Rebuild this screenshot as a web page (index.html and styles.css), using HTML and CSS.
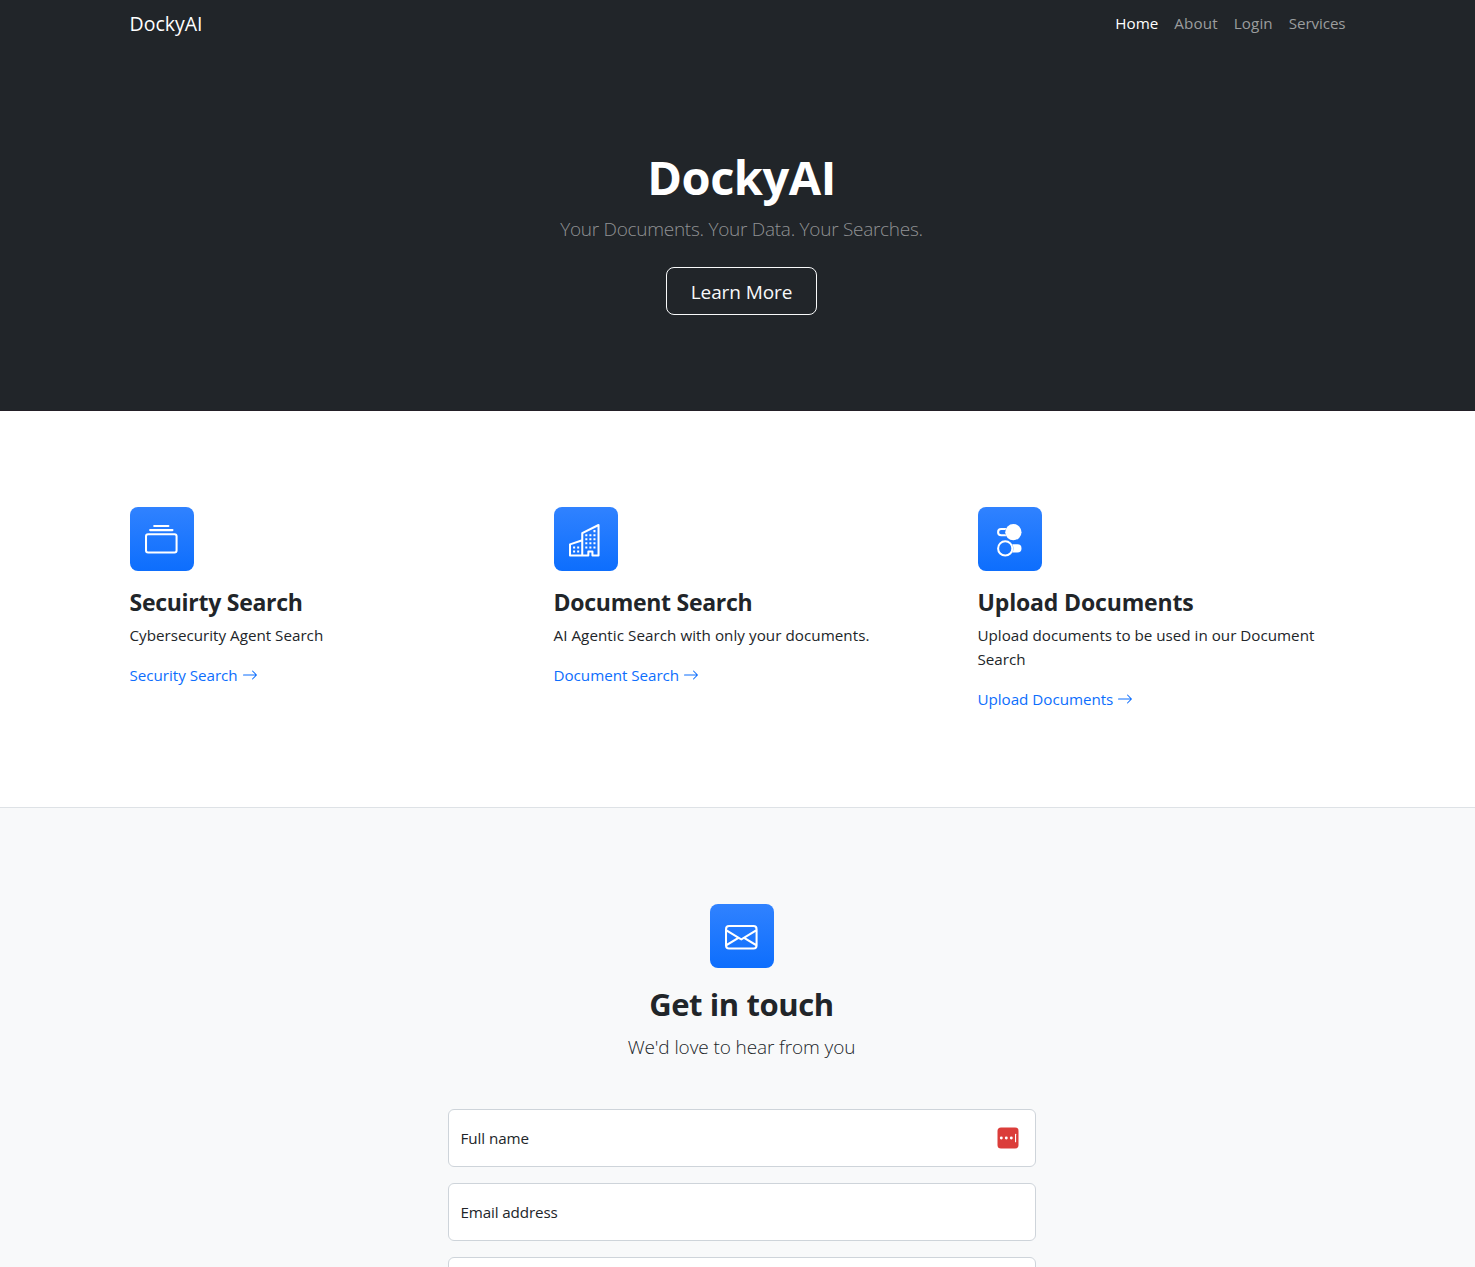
FILE: index.html
```html
<!DOCTYPE html>
<html lang="en">
<head>
<meta charset="utf-8">
<title>DockyAI</title>
<link rel="stylesheet" href="styles.css">
</head>
<body>
<div class="page">
  <nav class="navbar">
    <div class="container">
      <a class="brand" href="#"><span>DockyAI</span></a>
      <ul class="nav-links">
        <li><a class="active" href="#">Home</a></li>
        <li><a class="about" href="#">About</a></li>
        <li><a class="login" href="#">Login</a></li>
        <li><a class="services" href="#">Services</a></li>
      </ul>
    </div>
  </nav>
  <header class="hero">
    <h1><span>DockyAI</span></h1>
    <p><span>Your Documents. Your Data. Your Searches.</span></p>
    <a class="btn" href="#"><span>Learn More</span></a>
  </header>
  <section class="features">
    <div class="container grid">
      <article>
        <div class="feature-icon"><svg viewBox="0 0 16 16"><path d="M2.5 3.5a.5.5 0 0 1 0-1h11a.5.5 0 0 1 0 1zm2-2a.5.5 0 0 1 0-1h7a.5.5 0 0 1 0 1zM0 13a1.5 1.5 0 0 0 1.5 1.5h13A1.5 1.5 0 0 0 16 13V6a1.5 1.5 0 0 0-1.5-1.5h-13A1.5 1.5 0 0 0 0 6zm1.5.5A.5.5 0 0 1 1 13V6a.5.5 0 0 1 .5-.5h13a.5.5 0 0 1 .5.5v7a.5.5 0 0 1-.5.5z"/></svg></div>
        <h2><span>Secuirty Search</span></h2>
        <p><span>Cybersecurity Agent Search</span></p>
        <a class="more" href="#"><span>Security Search</span><svg viewBox="0 0 16 16"><path d="M1 8a.5.5 0 0 1 .5-.5h11.793l-3.147-3.146a.5.5 0 0 1 .708-.708l4 4a.5.5 0 0 1 0 .708l-4 4a.5.5 0 0 1-.708-.708L13.293 8.5H1.5A.5.5 0 0 1 1 8z"/></svg></a>
      </article>
      <article>
        <div class="feature-icon"><svg viewBox="0 0 16 16"><path d="M14.763.075A.5.5 0 0 1 15 .5v15a.5.5 0 0 1-.5.5h-3a.5.5 0 0 1-.5-.5V14h-1v1.5a.5.5 0 0 1-.5.5h-9a.5.5 0 0 1-.5-.5V10a.5.5 0 0 1 .342-.474L6 7.64V4.5a.5.5 0 0 1 .276-.447l8-4a.5.5 0 0 1 .487.022ZM6 8.694 1 10.36V15h5V8.694ZM7 15h2v-1.5a.5.5 0 0 1 .5-.5h2a.5.5 0 0 1 .5.5V15h2V1.309l-7 3.5V15Z"/><path d="M2 11h1v1H2v-1Zm2 0h1v1H4v-1Zm-2 2h1v1H2v-1Zm2 0h1v1H4v-1Zm4-4h1v1H8V9Zm2 0h1v1h-1V9Zm-2 2h1v1H8v-1Zm2 0h1v1h-1v-1Zm2-2h1v1h-1V9Zm0 2h1v1h-1v-1ZM8 7h1v1H8V7Zm2 0h1v1h-1V7Zm2 0h1v1h-1V7ZM8 5h1v1H8V5Zm2 0h1v1h-1V5Zm2 0h1v1h-1V5Zm0-2h1v1h-1V3Z"/></svg></div>
        <h2><span>Document Search</span></h2>
        <p class="wide"><span>AI Agentic Search with only your documents.</span></p>
        <a class="more" href="#"><span>Document Search</span><svg viewBox="0 0 16 16"><path d="M1 8a.5.5 0 0 1 .5-.5h11.793l-3.147-3.146a.5.5 0 0 1 .708-.708l4 4a.5.5 0 0 1 0 .708l-4 4a.5.5 0 0 1-.708-.708L13.293 8.5H1.5A.5.5 0 0 1 1 8z"/></svg></a>
      </article>
      <article>
        <div class="feature-icon"><svg viewBox="0 0 16 16"><path d="M9.465 10H12a2 2 0 1 1 0 4H9.465c.34-.588.535-1.271.535-2 0-.729-.195-1.412-.535-2z"/><path d="M6 15a3 3 0 1 0 0-6 3 3 0 0 0 0 6zm0 1a4 4 0 1 1 0-8 4 4 0 0 1 0 8zm.535-10a3.975 3.975 0 0 1-.409-1H4a1 1 0 0 1 0-2h2.126c.091-.355.23-.69.41-1H4a2 2 0 1 0 0 4h2.535z"/><path d="M14 4a4 4 0 1 1-8 0 4 4 0 0 1 8 0z"/></svg></div>
        <h2 class="wide"><span>Upload Documents</span></h2>
        <p><span>Upload documents to be used in our Document Search</span></p>
        <a class="more" href="#"><span>Upload Documents</span><svg viewBox="0 0 16 16"><path d="M1 8a.5.5 0 0 1 .5-.5h11.793l-3.147-3.146a.5.5 0 0 1 .708-.708l4 4a.5.5 0 0 1 0 .708l-4 4a.5.5 0 0 1-.708-.708L13.293 8.5H1.5A.5.5 0 0 1 1 8z"/></svg></a>
      </article>
    </div>
  </section>
  <section class="contact">
    <div class="feature-icon"><svg viewBox="0 0 16 16"><path d="M0 4a2 2 0 0 1 2-2h12a2 2 0 0 1 2 2v8a2 2 0 0 1-2 2H2a2 2 0 0 1-2-2V4Zm2-1a1 1 0 0 0-1 1v.217l7 4.2 7-4.2V4a1 1 0 0 0-1-1H2Zm13 2.383-4.708 2.825L15 11.105V5.383Zm-.034 6.876-5.64-3.471L8 9.583l-1.326-.795-5.64 3.47A1 1 0 0 0 2 13h12a1 1 0 0 0 .966-.741ZM1 11.105l4.708-2.897L1 5.383v5.722Z"/></svg></div>
    <h2><span>Get in touch</span></h2>
    <p><span>We'd love to hear from you</span></p>
    <form class="form">
      <div class="field"><label>Full name</label>
        <svg class="pass" viewBox="0 0 22 22"><rect x=".5" y=".5" width="21" height="21" rx="3.5" fill="#db3d3a"/><g fill="#fff"><circle cx="4.3" cy="11" r="1.45"/><circle cx="9.3" cy="11" r="1.45"/><circle cx="14.3" cy="11" r="1.45"/><rect x="18" y="6.7" width="1.1" height="8.6" rx=".5"/></g></svg>
      </div>
      <div class="field"><label class="email">Email address</label></div>
      <div class="field"></div>
    </form>
  </section>
</div>
</body>
</html>
```
FILE: styles.css
```css
* { box-sizing: border-box; }
html { overflow: hidden; }
body {
  margin: 0;
  height: 1267px;
  overflow: hidden;
  font: 400 15.2px/24px "Segoe UI", "Open Sans", sans-serif;
  color: #212529;
  background: #fff;
}
.page { width: 1483px; }
h1, h2, p, ul { margin: 0; padding: 0; }
a { text-decoration: none; color: inherit; }
.container { width: 1224px; margin: 0 auto; }

.navbar { background: #212529; color: #fff; height: 51px; }
.navbar .container {
  display: flex;
  justify-content: space-between;
  align-items: center;
  height: 47px;
}
.brand { font-size: 19.5px; line-height: 30px; letter-spacing: 0; }
.nav-links { display: flex; list-style: none; padding-bottom: 2px; }
.nav-links a { display: block; padding: 0 8px; color: #9b9d9e; }
.nav-links a.active { color: #fff; }
.nav-links .about { letter-spacing: .15px; }
.nav-links .login { letter-spacing: .1px; }
.nav-links .services { letter-spacing: -.1px; }

.hero {
  display: flex;
  flex-direction: column;
  align-items: center;
  height: 360px;
  padding-top: 97px;
  background: #212529;
  border-bottom: 1px solid #231f27;
}
.hero h1 { font-size: 47px; line-height: 58px; font-weight: 700; color: #fff; letter-spacing: -.5px; }
.hero p { margin: 8px 0 23px; font-size: 19px; line-height: 30px; font-weight: 300; color: #909294; letter-spacing: -.27px; }
.btn {
  display: flex;
  align-items: center;
  justify-content: center;
  width: 151px;
  height: 48px;
  padding-top: 2px;
  border: 1px solid #f8f9fa;
  border-radius: 8px;
  color: #f8f9fa;
  font-size: 19px;
  letter-spacing: -.1px;
}

.features { padding: 96px 0; border-bottom: 1px solid #dee2e6; }
.grid { display: grid; grid-template-columns: repeat(3, 376px); gap: 48px; }
.feature-icon {
  display: flex;
  align-items: center;
  justify-content: center;
  width: 64px;
  height: 64px;
  padding-top: 2px;
  border-radius: 8px;
  color: #fff;
  background: linear-gradient(180deg, #3082ff, #0d6efd);
}
.feature-icon svg { width: 32.6px; height: 32.6px; fill: currentColor; overflow: visible; }
.features h2 { margin: 17px 0 6px; font-size: 23px; line-height: 29px; font-weight: 700; letter-spacing: -.27px; }
.features h2.wide { letter-spacing: -.15px; }
.features p { margin-bottom: 16px; letter-spacing: 0; }
.features p.wide { letter-spacing: .05px; }
.more { display: flex; align-items: center; gap: 4px; height: 24px; color: #0d6efd; letter-spacing: -.03px; }
.more svg { width: 16px; height: 16px; fill: currentColor; }

.contact {
  display: flex;
  flex-direction: column;
  align-items: center;
  padding-top: 96px;
  background: #f8f9fa;
}
.contact h2 { margin: 17px 0 8px; font-size: 31px; line-height: 39px; font-weight: 700; letter-spacing: -.4px; }
.contact p { margin-bottom: 47px; font-size: 19px; line-height: 30px; font-weight: 300; letter-spacing: -.1px; }
.form { display: flex; flex-direction: column; gap: 16px; width: 588px; }
.field {
  display: flex;
  align-items: center;
  justify-content: space-between;
  height: 58px;
  padding: 0 16px 0 12px;
  background: #fff;
  border: 1px solid #ced4da;
  border-radius: 6px;
  letter-spacing: -.07px;
}
.field .email { letter-spacing: -.13px; }
.pass { width: 22px; height: 22px; }
```
